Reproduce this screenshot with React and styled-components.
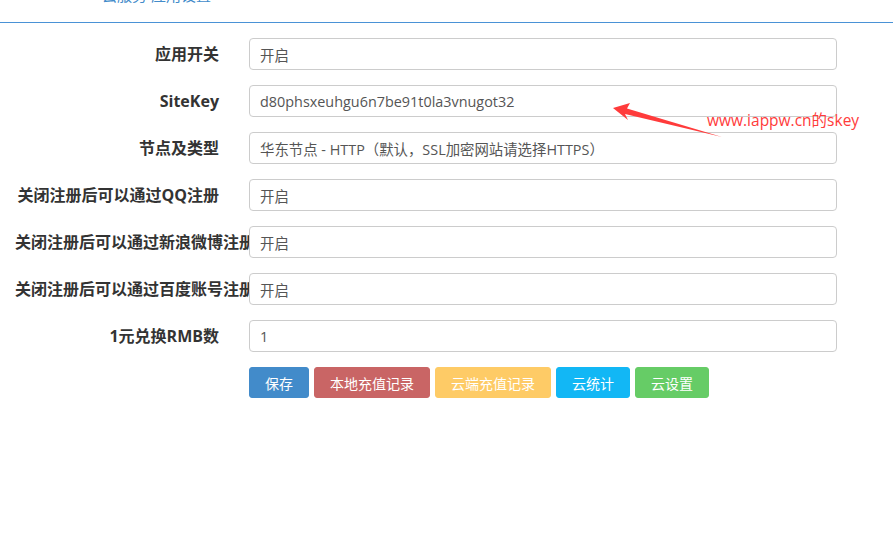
import React from 'react';
import styled, { createGlobalStyle } from 'styled-components';

const GlobalStyle = createGlobalStyle`
  body {
    margin: 0;
    background: #fff;
    font-family: "Open Sans", "Noto Sans CJK SC", sans-serif;
    color: #333;
  }
`;

const Page = styled.div`
  position: relative;
  width: 893px;
  height: 549px;
  overflow: hidden;
`;

const Header = styled.div`
  height: 22px;
  display: flex;
  align-items: flex-end;
  padding-left: 102px;
  border-bottom: 1px solid #4a92d6;
`;

const Title = styled.h3`
  margin: 0 0 17px;
  font-size: 15px;
  line-height: 20px;
  font-weight: normal;
  color: #428bca;
  white-space: nowrap;
`;

const Form = styled.form`
  padding-top: 15px;
`;

const Row = styled.div`
  display: grid;
  grid-template-columns: 234px 588px;
  column-gap: 15px;
  margin-bottom: 15px;
`;

const Label = styled.label`
  padding: 0 15px;
  text-align: right;
  white-space: nowrap;
  font-size: 16px;
  font-weight: bold;
  line-height: 32px;
  color: #333;
`;

const Input = styled.input`
  position: relative;
  box-sizing: border-box;
  width: 100%;
  height: 32px;
  padding: 0 10px;
  border: 1px solid #ccc;
  border-radius: 4px;
  background: #fff;
  font-family: "Open Sans", "Noto Sans CJK SC", sans-serif;
  font-size: 14.4px;
  color: #555;
  outline: none;
`;

const Buttons = styled.div`
  display: flex;
  gap: 5px;
  padding-left: 249px;
  margin-top: 1px;
`;

const Button = styled.button`
  height: 31px;
  padding: 0 15px;
  border: 1px solid ${(p) => p.$bg};
  border-radius: 3px;
  background: ${(p) => p.$bg};
  color: #fff;
  font-family: "Open Sans", "Noto Sans CJK SC", sans-serif;
  font-size: 14px;
  cursor: pointer;
`;

const Note = styled.div`
  position: absolute;
  left: 613px;
  top: 100px;
  width: 260px;
  height: 40px;
`;

const NoteText = styled.span`
  position: absolute;
  left: 94px;
  top: 9px;
  font-family: "Open Sans", "Noto Sans CJK SC", sans-serif;
  font-size: 15.5px;
  line-height: 22px;
  color: #ff3b3b;
  white-space: nowrap;
`;

const fields = [
  ['应用开关', '开启'],
  ['SiteKey', 'd80phsxeuhgu6n7be91t0la3vnugot32'],
  ['节点及类型', '华东节点 - HTTP（默认，SSL加密网站请选择HTTPS）'],
  ['关闭注册后可以通过QQ注册', '开启'],
  ['关闭注册后可以通过新浪微博注册', '开启'],
  ['关闭注册后可以通过百度账号注册', '开启'],
  ['1元兑换RMB数', '1'],
];

const buttons = [
  ['保存', '#428bca'],
  ['本地充值记录', '#c96565'],
  ['云端充值记录', '#fecb66'],
  ['云统计', '#12b7f5'],
  ['云设置', '#66cc66'],
];

export default function App() {
  return (
    <Page>
      <GlobalStyle />
      <Header>
        <Title>云服务 应用设置</Title>
      </Header>
      <Form onSubmit={(e) => e.preventDefault()}>
        {fields.map(([label, value]) => (
          <Row key={label}>
            <Label>{label}</Label>
            <Input readOnly defaultValue={value} />
          </Row>
        ))}
        <Buttons>
          {buttons.map(([text, bg]) => (
            <Button key={text} type="button" $bg={bg}>
              {text}
            </Button>
          ))}
        </Buttons>
      </Form>
      <Note>
        <svg width="120" height="40" viewBox="613 100 120 40">
          <polygon
            points="613,108 630,103 627,108.5 722,137 625,114 628,120"
            fill="#ff3b3b"
          />
        </svg>
        <NoteText>www.iappw.cn的skey</NoteText>
      </Note>
    </Page>
  );
}
